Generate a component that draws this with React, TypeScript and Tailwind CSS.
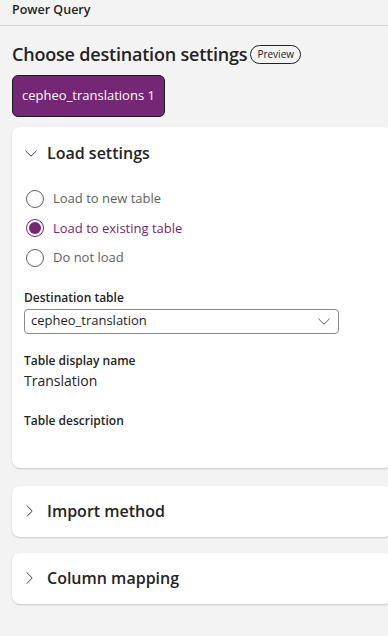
const options = [
  { label: 'Load to new table', checked: false },
  { label: 'Load to existing table', checked: true },
  { label: 'Do not load', checked: false },
];

function ChevDown({ className }: { className?: string }) {
  return (
    <svg className={className} width="12" height="7" viewBox="0 0 12 7" fill="none">
      <path d="M0.5 0.8 L6 6.2 L11.5 0.8" stroke="currentColor" strokeWidth="1" />
    </svg>
  );
}

function ChevRight({ className }: { className?: string }) {
  return (
    <svg className={className} width="7" height="12" viewBox="0 0 7 12" fill="none">
      <path d="M0.8 0.5 L6.2 6 L0.8 11.5" stroke="currentColor" strokeWidth="1" />
    </svg>
  );
}

function Radio({ label, checked }: { label: string; checked: boolean }) {
  return (
    <div className="flex h-[29.5px] items-center gap-[9px]">
      <span
        className={`flex h-[18px] w-[18px] items-center justify-center rounded-full border ${
          checked ? 'border-[#742774]' : 'border-[#616161]'
        }`}
      >
        {checked && <span className="h-[12px] w-[12px] rounded-full bg-[#742774]" />}
      </span>
      <span className={`text-[13px] ${checked ? 'text-[#742774]' : 'text-[#616161]'}`}>{label}</span>
    </div>
  );
}

function Collapsed({ title }: { title: string }) {
  return (
    <div className="-mr-4 flex h-[51px] items-center rounded-lg bg-white pl-[14px] shadow-[0_1px_2px_rgba(0,0,0,0.18)]">
      <ChevRight className="text-[#424242]" />
      <span className="ml-[14px] text-[16px] font-semibold text-[#242424]">{title}</span>
    </div>
  );
}

export default function App() {
  return (
    <div className="h-[636px] w-[388px] overflow-hidden bg-[#f3f3f3] font-['Open_Sans',sans-serif] text-[#242424]">
      <div className="h-[26px] border-b border-[#d6d6d6] pl-3 pt-[2px] text-[12.5px] font-semibold leading-[16px]">
        Power Query
      </div>

      <div className="px-3">
        <div className="mt-[16px] flex items-center gap-[3px]">
          <h1 className="text-[18px] font-semibold leading-[24px] tracking-[-0.2px]">Choose destination settings</h1>
          <span className="rounded-full border border-[#242424] px-[6px] text-[10px] leading-[17px]">Preview</span>
        </div>

        <button className="mt-[9px] h-[42px] w-[153px] rounded-md border border-[#1b1b1b] bg-[#742774] text-[13px] font-normal text-white">
          cepheo_translations 1
        </button>

        <div className="-mr-4 mt-[10px] rounded-lg bg-white pb-[39px] shadow-[0_1px_2px_rgba(0,0,0,0.18)]">
          <div className="flex h-[52px] items-center pl-[13px]">
            <ChevDown className="text-[#424242]" />
            <span className="ml-[10px] text-[16px] font-semibold">Load settings</span>
          </div>

          <div className="mt-[5px] pl-[14px]">
            {options.map((o) => (
              <Radio key={o.label} label={o.label} checked={o.checked} />
            ))}
          </div>

          <div className="mt-[17px] pl-[12px]">
            <div className="text-[12px] font-semibold leading-[16px]">Destination table</div>
            <div className="mt-[3px] flex h-[25px] w-[315px] items-center justify-between rounded border border-[#8a8a8a] pl-[6px] pr-[8px]">
              <span className="text-[13px]">cepheo_translation</span>
              <ChevDown className="text-[#616161]" />
            </div>

            <div className="mt-[19px] text-[12px] font-semibold leading-[16px]">Table display name</div>
            <div className="mt-[3px] text-[14px] leading-[18px]">Translation</div>

            <div className="mt-[23px] text-[12px] font-semibold leading-[16px]">Table description</div>
          </div>
        </div>

        <div className="mt-[18px] flex flex-col gap-4">
          <Collapsed title="Import method" />
          <Collapsed title="Column mapping" />
        </div>
      </div>
    </div>
  );
}
